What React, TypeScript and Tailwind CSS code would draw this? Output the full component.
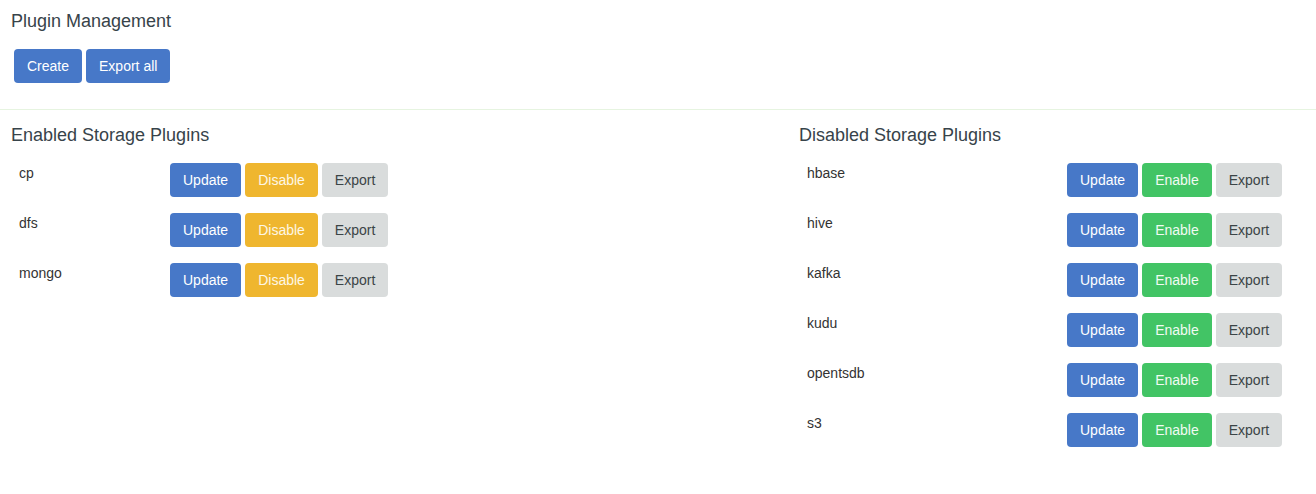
import React from "react";

const enabled = ["cp", "dfs", "mongo"];
const disabled = ["hbase", "hive", "kafka", "kudu", "opentsdb", "s3"];

// bootstrap-ish button
function Btn({ kind, children }: { kind: "blue" | "yellow" | "green" | "gray"; children: React.ReactNode }) {
  const colors = {
    blue: "bg-[#4778c8] text-white",
    yellow: "bg-[#efb62f] text-[#fdf6e6]",
    green: "bg-[#42c465] text-[#f1fbf3]",
    gray: "bg-[#d9dcdc] text-[#3b4446]",
  };
  return (
    <button className={`h-[34px] px-[13px] rounded-[4px] text-[14px] leading-5 ${colors[kind]}`}>
      {children}
    </button>
  );
}

function PluginTable({ title, names, toggle, nameWidth }: { title: string; names: string[]; toggle: "enable" | "disable"; nameWidth: string }) {
  return (
    <div>
      <h3 className="text-[18px] leading-[22px] text-[#37434a] mt-[14px] mb-[9px]">{title}</h3>
      <div className="flex flex-col">
        {names.map((n) => (
          <div key={n} className="flex items-start p-2 h-[50px]">
            <div className={`${nameWidth} text-[14px] leading-5 text-[#333]`}>{n}</div>
            <div className="flex gap-1">
              <Btn kind="blue">Update</Btn>
              {toggle === "disable" ? (
                <Btn kind="yellow">Disable</Btn>
              ) : (
                <Btn kind="green">Enable</Btn>
              )}
              <Btn kind="gray">Export</Btn>
            </div>
          </div>
        ))}
      </div>
    </div>
  );
}

export default function App() {
  return (
    <div className="w-[1316px] h-[494px] bg-white" style={{ fontFamily: '"Liberation Sans", Arial, sans-serif' }}>
      <div className="px-[11px] pt-[10px] pb-[26px]">
        <h2 className="text-[18px] leading-[22px] text-[#37434a]">Plugin Management</h2>
        <div className="flex gap-1 mt-[17px] pl-[3px]">
          <Btn kind="blue">Create</Btn>
          <Btn kind="blue">Export all</Btn>
        </div>
      </div>
      <div className="border-t border-[#e6f4e0]" />
      <div className="grid grid-cols-[788px_1fr] px-[11px]">
        <PluginTable title="Enabled Storage Plugins" names={enabled} toggle="disable" nameWidth="w-[151px]" />
        <PluginTable title="Disabled Storage Plugins" names={disabled} toggle="enable" nameWidth="w-[260px]" />
      </div>
    </div>
  );
}
